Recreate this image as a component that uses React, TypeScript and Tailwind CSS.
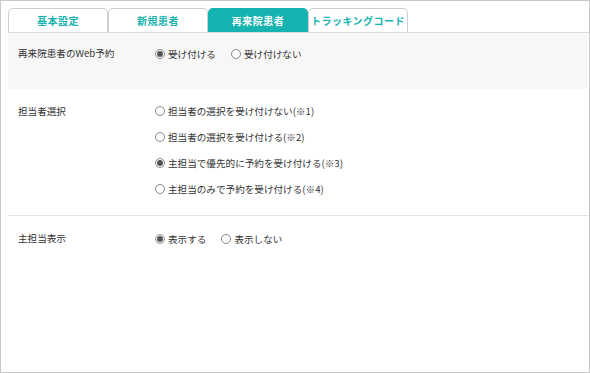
const font = { fontFamily: '"Noto Sans CJK JP", "Noto Sans", sans-serif' };

function Radio({ checked }: { checked?: boolean }) {
  return (
    <span className="flex h-[10px] w-[10px] shrink-0 items-center justify-center rounded-full border border-[#8a8a8a] bg-white">
      {checked && <span className="h-[6px] w-[6px] rounded-full bg-[#555]" />}
    </span>
  );
}

function Option({ label, checked }: { label: string; checked?: boolean }) {
  return (
    <label className="flex items-center gap-[3px] whitespace-nowrap">
      <Radio checked={checked} />
      <span>{label}</span>
    </label>
  );
}

const tabs = ['基本設定', '新規患者', '再来院患者', 'トラッキングコード'];

export default function App() {
  return (
    <div
      className="h-[373px] w-[590px] border border-[#c9c9c9] bg-white pl-[7px] pt-[7px] text-[9.6px] text-[#333]"
      style={font}
    >
      <div className="flex border-b border-[#dcdcdc]">
        {tabs.map((t, i) =>
          i === 2 ? (
            <div
              key={t}
              className="flex h-[24px] w-[100px] items-center justify-center whitespace-nowrap rounded-t-[5px] border border-b-0 border-[#16b3b0] bg-[#16b3b0] text-[10px] font-bold tracking-[0.5px] text-white"
            >
              {t}
            </div>
          ) : (
            <div
              key={t}
              className="flex h-[24px] w-[100px] items-center justify-center whitespace-nowrap rounded-t-[5px] border border-b-0 border-[#cfcfcf] bg-white text-[10px] font-bold tracking-[0.5px] text-[#16b3b0]"
            >
              {t}
            </div>
          )
        )}
      </div>

      <div className="mr-[2px] flex h-[56px] bg-[#f7f7f7] pt-[13px]">
        <div className="w-[147px] pl-[10px]">再来院患者のWeb予約</div>
        <div className="flex h-[16px] gap-[15px]">
          <Option label="受け付ける" checked />
          <Option label="受け付けない" />
        </div>
      </div>

      <div className="flex border-b border-[#e3e3e3] pb-[17px] pt-[15px]">
        <div className="w-[147px] pl-[10px]">担当者選択</div>
        <div className="flex flex-col gap-[10px]">
          <div className="h-[16px]"><Option label="担当者の選択を受け付けない(※1)" /></div>
          <div className="h-[16px]"><Option label="担当者の選択を受け付ける(※2)" /></div>
          <div className="h-[16px]"><Option label="主担当で優先的に予約を受け付ける(※3)" checked /></div>
          <div className="h-[16px]"><Option label="主担当のみで予約を受け付ける(※4)" /></div>
        </div>
      </div>

      <div className="flex pt-[15px]">
        <div className="w-[147px] pl-[10px]">主担当表示</div>
        <div className="flex h-[16px] gap-[15px]">
          <Option label="表示する" checked />
          <Option label="表示しない" />
        </div>
      </div>
    </div>
  );
}
